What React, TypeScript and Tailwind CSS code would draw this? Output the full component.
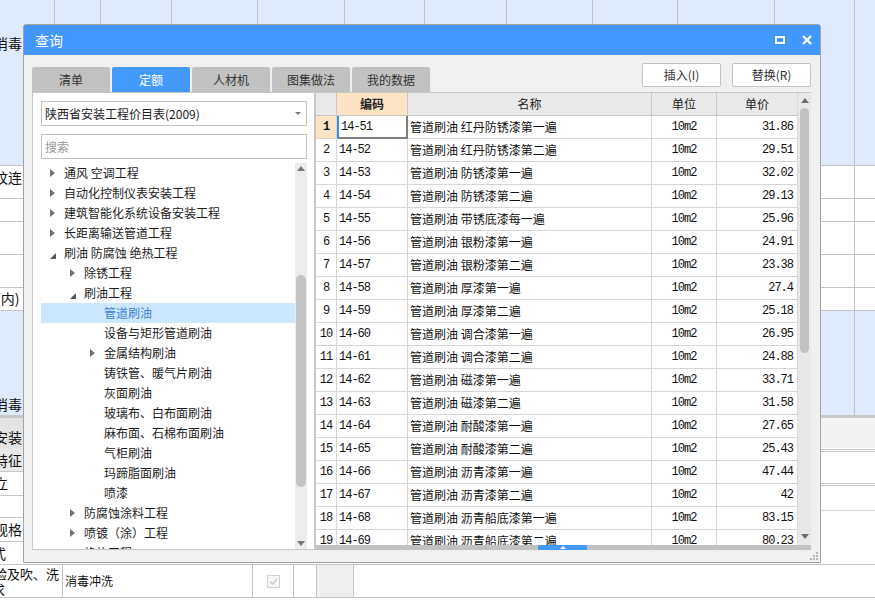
import React from "react";

const tabs = ["清单", "定额", "人材机", "图集做法", "我的数据"];

const tree: [number, string, string][] = [
  [1, "c", "通风 空调工程"],
  [1, "c", "自动化控制仪表安装工程"],
  [1, "c", "建筑智能化系统设备安装工程"],
  [1, "c", "长距离输送管道工程"],
  [1, "o", "刷油 防腐蚀 绝热工程"],
  [2, "c", "除锈工程"],
  [2, "o", "刷油工程"],
  [3, "", "管道刷油"],
  [3, "", "设备与矩形管道刷油"],
  [3, "c", "金属结构刷油"],
  [3, "", "铸铁管、暖气片刷油"],
  [3, "", "灰面刷油"],
  [3, "", "玻璃布、白布面刷油"],
  [3, "", "麻布面、石棉布面刷油"],
  [3, "", "气柜刷油"],
  [3, "", "玛蹄脂面刷油"],
  [3, "", "喷漆"],
  [2, "c", "防腐蚀涂料工程"],
  [2, "c", "喷镀（涂）工程"],
  [2, "c", "绝热工程"],
];

const indent: Record<number, string> = { 1: "pl-[4px]", 2: "pl-[24px]", 3: "pl-[44px]" };

const rows: [string, string, string][] = [
  ["14-51", "红丹防锈漆第一遍", "31.86"],
  ["14-52", "红丹防锈漆第二遍", "29.51"],
  ["14-53", "防锈漆第一遍", "32.02"],
  ["14-54", "防锈漆第二遍", "29.13"],
  ["14-55", "带锈底漆每一遍", "25.96"],
  ["14-56", "银粉漆第一遍", "24.91"],
  ["14-57", "银粉漆第二遍", "23.38"],
  ["14-58", "厚漆第一遍", "27.4"],
  ["14-59", "厚漆第二遍", "25.18"],
  ["14-60", "调合漆第一遍", "26.95"],
  ["14-61", "调合漆第二遍", "24.88"],
  ["14-62", "磁漆第一遍", "33.71"],
  ["14-63", "磁漆第二遍", "31.58"],
  ["14-64", "耐酸漆第一遍", "27.65"],
  ["14-65", "耐酸漆第二遍", "25.43"],
  ["14-66", "沥青漆第一遍", "47.44"],
  ["14-67", "沥青漆第二遍", "42"],
  ["14-68", "沥青船底漆第一遍", "83.15"],
  ["14-69", "沥青船底漆第二遍", "80.23"],
];

const topCols = ["w-[55px]", "w-[46px]", "w-[71px]", "w-[86px]", "w-[87px]", "w-[80px]", "w-[82px]", "w-[86px]", "w-[85px]", "w-[97px]", "w-[80px]"];

const mono = "font-['Liberation_Mono','DejaVu_Sans_Mono',monospace] text-[12px] tracking-[-1px]";

const Closed = () => (
  <svg width="5" height="8" viewBox="0 0 5 8">
    <path d="M0 0L5 4L0 8Z" fill="#707070" />
  </svg>
);

const Open = () => (
  <svg width="6" height="6" viewBox="0 0 6 6" className="mt-[6px]">
    <path d="M6 0L6 6L0 6Z" fill="#555" />
  </svg>
);

const Up = ({ c = "#6d6d6d" }: { c?: string }) => (
  <svg width="8" height="5" viewBox="0 0 8 5">
    <path d="M0 5L4 0L8 5Z" fill={c} />
  </svg>
);

const Down = ({ c = "#6d6d6d" }: { c?: string }) => (
  <svg width="8" height="5" viewBox="0 0 8 5">
    <path d="M0 0L8 0L4 5Z" fill={c} />
  </svg>
);

const BgRow = ({ h, children }: { h: string; children?: React.ReactNode }) => (
  <div className={"flex border-b border-[#c4c4c4] bg-white " + h}>
    <div className="w-[855px] overflow-hidden border-r border-[#c4c4c4]">{children}</div>
    <div className="flex-1" />
  </div>
);

const Dialog = () => (
  <div className="absolute left-[23px] top-[24px] flex h-[539px] w-[798px] flex-col rounded-t-[3px] border border-[#a3a3a3] bg-[#f0f0f0]">
    {/* title */}
    <div className="flex h-[30px] items-center justify-between bg-[#4398fd] pl-[11px] pr-[8px] text-white">
      <span className="text-[14px] leading-none">查询</span>
      <div className="flex items-center gap-[17px]">
        <div className="h-[8px] w-[10px] border-2 border-white" />
        <svg width="10" height="10" viewBox="0 0 10 10">
          <path d="M1 1L9 9M9 1L1 9" stroke="white" strokeWidth="2.2" />
        </svg>
      </div>
    </div>

    {/* toolbar */}
    <div className="mt-[8px] flex h-[29px] justify-between pl-[8px] pr-[9px]">
      <div className="flex gap-[2px] self-end">
        {tabs.map((t, i) => (
          <div
            key={t}
            className={
              "flex h-[25px] w-[78px] items-center justify-center rounded-t-[2px] text-[12px] " +
              (i === 1 ? "bg-[#4499fd] text-white" : "bg-[#c2c2c2] text-[#333]")
            }
          >
            {t}
          </div>
        ))}
      </div>
      <div className="flex gap-[11px] self-start">
        {["插入(I)", "替换(R)"].map((b) => (
          <div key={b} className="flex h-[24px] w-[79px] items-center justify-center rounded-[2px] border border-[#c3c3c3] bg-white text-[12px] text-[#333]">
            {b}
          </div>
        ))}
      </div>
    </div>

    {/* content */}
    <div className="flex h-[458px] pl-[8px] pr-[9px]">
      {/* left panel */}
      <div className="flex w-[283px] flex-col border border-[#c8c8c8] bg-white">
        <div className="ml-[8px] mt-[8px] flex h-[25px] w-[266px] items-center justify-between border border-[#c3c3c3] pl-[3px] pr-[5px] text-[12px] text-[#222]">
          <span>陕西省安装工程价目表(2009)</span>
          <svg width="6" height="3" viewBox="0 0 6 3">
            <path d="M0 0L6 0L3 3Z" fill="#777" />
          </svg>
        </div>
        <div className="ml-[8px] mt-[8px] flex h-[25px] w-[266px] items-center border border-[#c3c3c3] pl-[3px] text-[12px] text-[#9a9a9a]">
          搜索
        </div>
        <div className="ml-[8px] mt-[4px] flex h-[386px]">
          <div className="w-[254px] overflow-hidden">
            {tree.map(([lvl, st, label], i) => (
              <div
                key={i}
                className={
                  "flex h-[20px] items-center text-[12px] " +
                  indent[lvl] +
                  (i === 7 ? " bg-[#cce8ff] text-[#3b82d6]" : " text-[#1c1c1c]")
                }
              >
                <div className="flex h-[20px] w-[19px] items-center pl-[5px]">
                  {st === "c" ? <Closed /> : st === "o" ? <Open /> : null}
                </div>
                <span className="whitespace-nowrap">{label}</span>
              </div>
            ))}
          </div>
          <div className="flex w-[12px] flex-col items-center bg-[#ececec] pt-[3px] pb-[3px]">
            <Up c="#7a7a7a" />
            <div className="mt-[104px] h-[212px] w-[10px] rounded-full bg-[#c4c4c4]" />
            <div className="flex-1" />
            <Down c="#7a7a7a" />
          </div>
        </div>
      </div>

      {/* right table */}
      <div className="flex w-[496px] flex-col border-t border-l border-[#c8c8c8] bg-white">
        <div className="flex h-[452px]">
          <div className="w-[481px] overflow-hidden">
            <div className="flex h-[23px] border-b border-[#c8c8c8] bg-[#e9e9e9] text-[12px] text-[#222]">
              <div className="w-[21px] border-r border-[#c8c8c8]" />
              <div className="flex w-[71px] items-center justify-center border-r border-[#c8c8c8] bg-[#fee4c4] font-bold">编码</div>
              <div className="flex w-[244px] items-center justify-center border-r border-[#c8c8c8]">名称</div>
              <div className="flex w-[65px] items-center justify-center border-r border-[#c8c8c8]">单位</div>
              <div className="flex w-[80px] items-center justify-center">单价</div>
            </div>
            {rows.map(([code, name, price], i) => (
              <div key={code} className="flex h-[23px] shrink-0 border-b border-[#d6d6d6] text-[#111]">
                <div
                  className={
                    "flex w-[21px] items-center justify-center border-r border-[#d6d6d6] " +
                    mono +
                    (i === 0 ? " bg-[#fee4c4] font-bold" : "")
                  }
                >
                  {i + 1}
                </div>
                <div
                  className={
                    "flex w-[71px] items-center pl-[2px] " +
                    mono +
                    (i === 0 ? " -mb-px border-b-2 border-l-2 border-r-2 border-b-[#7f7f7f] border-l-[#3c8de8] border-r-[#7f7f7f]" : " border-r border-[#d6d6d6]")
                  }
                >
                  {code}
                </div>
                <div className="flex w-[244px] items-center whitespace-nowrap border-r border-[#d6d6d6] pl-[2px] text-[12px]">
                  管道刷油&nbsp;{name}
                </div>
                <div className={"flex w-[65px] items-center justify-center border-r border-[#d6d6d6] " + mono}>10m2</div>
                <div className={"flex w-[80px] items-center justify-end pr-[4px] " + mono}>{price}</div>
              </div>
            ))}
          </div>
          <div className="flex w-[14px] flex-col items-center border-l border-[#d9d9d9] bg-[#e8e8e8] pt-[5px] pb-[6px]">
            <Up />
            <div className="mt-[5px] h-[245px] w-[9px] rounded-full bg-[#c1c1c1]" />
            <div className="flex-1" />
            <Down />
          </div>
        </div>
        <div className="flex h-[5px] bg-[#c2c2c2]">
          <div className="w-[222px]" />
          <div className="flex w-[49px] items-center justify-center bg-[#4499fd]">
            <svg width="6" height="3" viewBox="0 0 6 3">
              <path d="M0 3L3 0L6 3Z" fill="white" />
            </svg>
          </div>
        </div>
      </div>
    </div>

    {/* footer with grip */}
    <div className="flex flex-1 items-end justify-end pr-[2px] pb-[2px]">
      <svg width="8" height="8" viewBox="0 0 8 8">
        <rect x="6" y="0" width="2" height="2" fill="#b5b5b5" />
        <rect x="3" y="3" width="2" height="2" fill="#b5b5b5" />
        <rect x="6" y="3" width="2" height="2" fill="#b5b5b5" />
        <rect x="0" y="6" width="2" height="2" fill="#b5b5b5" />
        <rect x="3" y="6" width="2" height="2" fill="#b5b5b5" />
        <rect x="6" y="6" width="2" height="2" fill="#b5b5b5" />
      </svg>
    </div>
  </div>
);

export default function App() {
  return (
    <div className="relative h-[602px] w-[875px] overflow-hidden bg-white font-['Noto_Sans_CJK_SC','Noto_Sans',sans-serif] text-[#111]">
      {/* background application */}
      <div className="flex flex-col text-[14px]">
        <div className="flex h-[165px] bg-[#dfeafc]">
          {topCols.map((w, i) => (
            <div key={i} className={"border-r border-[#c0c0c0] " + w}>
              {i === 0 && <div className="-ml-[6px] mt-[33px] whitespace-nowrap leading-[20px]">消毒</div>}
            </div>
          ))}
          <div className="flex-1" />
        </div>
        <div className="border-t border-[#c4c4c4]" />
        <BgRow h="h-[33px]">
          <div className="-ml-[6px] mt-[1px] whitespace-nowrap leading-[20px]">纹连</div>
        </BgRow>
        <BgRow h="h-[23px]" />
        <BgRow h="h-[33px]" />
        <BgRow h="h-[33px]" />
        <BgRow h="h-[23px]">
          <div className="-ml-[4px] whitespace-nowrap leading-[20px]">(内)</div>
        </BgRow>
        <div className="flex h-[104px] bg-[#dfeafc]">
          <div className="flex w-[855px] items-end border-r border-[#c0c0c0] pb-[1px]">
            <div className="-ml-[6px] whitespace-nowrap leading-[20px]">消毒</div>
          </div>
          <div className="flex-1" />
        </div>
        <div className="flex h-[33px] border-t-[3px] border-[#c8c8c8] bg-[#f3f3f3]">
          <div className="flex w-[63px] items-center bg-[#e3e3e3] pt-[7px]">
            <span className="-ml-[6px] whitespace-nowrap leading-[20px]">安装</span>
          </div>
        </div>
        <div className="flex">
          <div className="flex w-[63px] flex-col">
            <div className="flex h-[24px] items-center border-b border-[#c8c8c8] bg-[#e9e9e9] pt-[2px]"><span className="-ml-[6px] whitespace-nowrap">特征</span></div>
            <div className="flex h-[24px] items-center border-b border-[#c8c8c8]"><span className="-ml-[6px]">立</span></div>
            <div className="h-[22px] border-b border-[#c8c8c8]" />
            <div className="flex h-[24px] items-center border-b border-[#c8c8c8]"><span className="-ml-[6px] whitespace-nowrap">规格</span></div>
            <div className="flex h-[22px] items-center"><span className="-ml-[8px]">式</span></div>
          </div>
          <div className="flex flex-1 flex-col">
            <div className="mt-[1px] h-[34px] border-t-[3px] border-double border-[#c4c4c4]" />
            <div className="h-[27px] border-t-[3px] border-double border-[#c4c4c4]" />
            <div className="border-t border-[#d6d6d6]" />
          </div>
        </div>
        <div className="flex h-[34px] border-y border-[#c4c4c4] text-[12px]">
          <div className="w-[63px] overflow-hidden border-r border-[#c4c4c4] pt-[1px] leading-[16px]">
            <div className="-ml-[6px] whitespace-nowrap text-[13px]">验及吹、洗</div>
            <div className="-ml-[8px] text-[13px]">求</div>
          </div>
          <div className="flex w-[190px] items-center border-r border-[#c4c4c4] pl-[2px] text-[12px]">消毒冲洗</div>
          <div className="flex w-[41px] items-center justify-center border-r border-[#c4c4c4]">
            <div className="flex h-[13px] w-[13px] items-center justify-center border border-[#d0d0d0] bg-[#f6f6f6]">
              <svg width="9" height="7" viewBox="0 0 9 7">
                <path d="M1 3.5L3.5 6L8 1" stroke="#c8c8c8" strokeWidth="1.4" fill="none" />
              </svg>
            </div>
          </div>
          <div className="w-[23px] border-r border-[#c4c4c4]" />
          <div className="w-[37px] border-r border-[#c4c4c4] bg-[#efefef]" />
          <div className="flex-1" />
        </div>
      </div>

      <Dialog />
    </div>
  );
}
